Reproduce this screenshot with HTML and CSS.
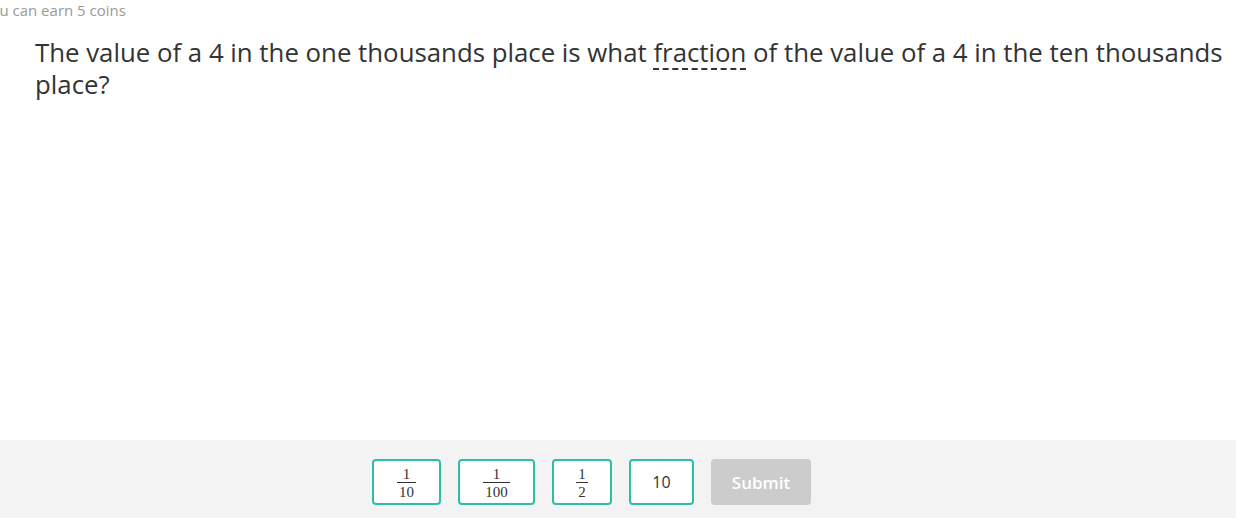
FILE: index.html
```html
<!DOCTYPE html>
<html>

<head>
  <meta charset="UTF-8">
  <meta name="viewport" content="width=device-width, initial-scale=1">
  <title>Question</title>
  <link rel="stylesheet" href="styles.css">
</head>

<body>
  <div class="page">
    <p class="coins">You can earn 5 coins</p>
    <div class="question">
      The value of a 4 in the one thousands place is what <span class="term">fraction</span> of the value of a 4 in the ten thousands place?
    </div>
  </div>
  <div class="answers">
    <button class="choice wide1">
      <span class="frac"><span class="num">1</span><span class="den">10</span></span>
    </button>
    <button class="choice wide2">
      <span class="frac"><span class="num">1</span><span class="den">100</span></span>
    </button>
    <button class="choice wide3">
      <span class="frac"><span class="num">1</span><span class="den">2</span></span>
    </button>
    <button class="choice wide4">10</button>
    <button class="submit" disabled>Submit</button>
  </div>
</body>

</html>
```

FILE: styles.css
```css
*{
  padding: 0;
  margin: 0;
  box-sizing: border-box;
}

body{
  font-family: "Open Sans", sans-serif;
  color: #333;
  background: #fff;
  height: 518px;
  display: flex;
  flex-direction: column;
  overflow: hidden;
}

.page{
  flex: 1;
}

.coins{
  font-size: 15px;
  line-height: 20px;
  color: #999;
  margin-left: -18px;
}

.question{
  margin-top: 16px;
  padding: 0 0 0 35px;
  font-size: 25.8px;
  line-height: 32px;
}

.term{
  text-decoration: underline dashed #333 2px;
  text-underline-offset: 6px;
}

.answers{
  height: 78px;
  background: #f3f3f3;
  display: flex;
  align-items: flex-start;
  gap: 17px;
  padding: 19px 0 0 372px;
}

.choice,
.submit{
  height: 46px;
  border-radius: 4px;
  font-family: "Open Sans", sans-serif;
  font-size: 16px;
  display: flex;
  align-items: center;
  justify-content: center;
}

.choice{
  background: #fff;
  border: 2px solid #2bbfa6;
  color: #333;
}

.wide1{ width: 69px; }
.wide2{ width: 77px; }
.wide3{ width: 60px; }
.wide4{ width: 65px; }

.submit{
  width: 100px;
  background: #ccc;
  border: none;
  color: #fff;
  font-size: 17px;
  font-weight: 600;
}

.frac{
  display: inline-flex;
  flex-direction: column;
  align-items: stretch;
  text-align: center;
  font-family: "Liberation Serif", serif;
  font-size: 15px;
  line-height: 12px;
  margin-top: 1px;
}

.num{
  padding: 0 2px 2px;
  border-bottom: 1px solid #333;
}

.den{
  padding: 3px 2px 0;
}
```
